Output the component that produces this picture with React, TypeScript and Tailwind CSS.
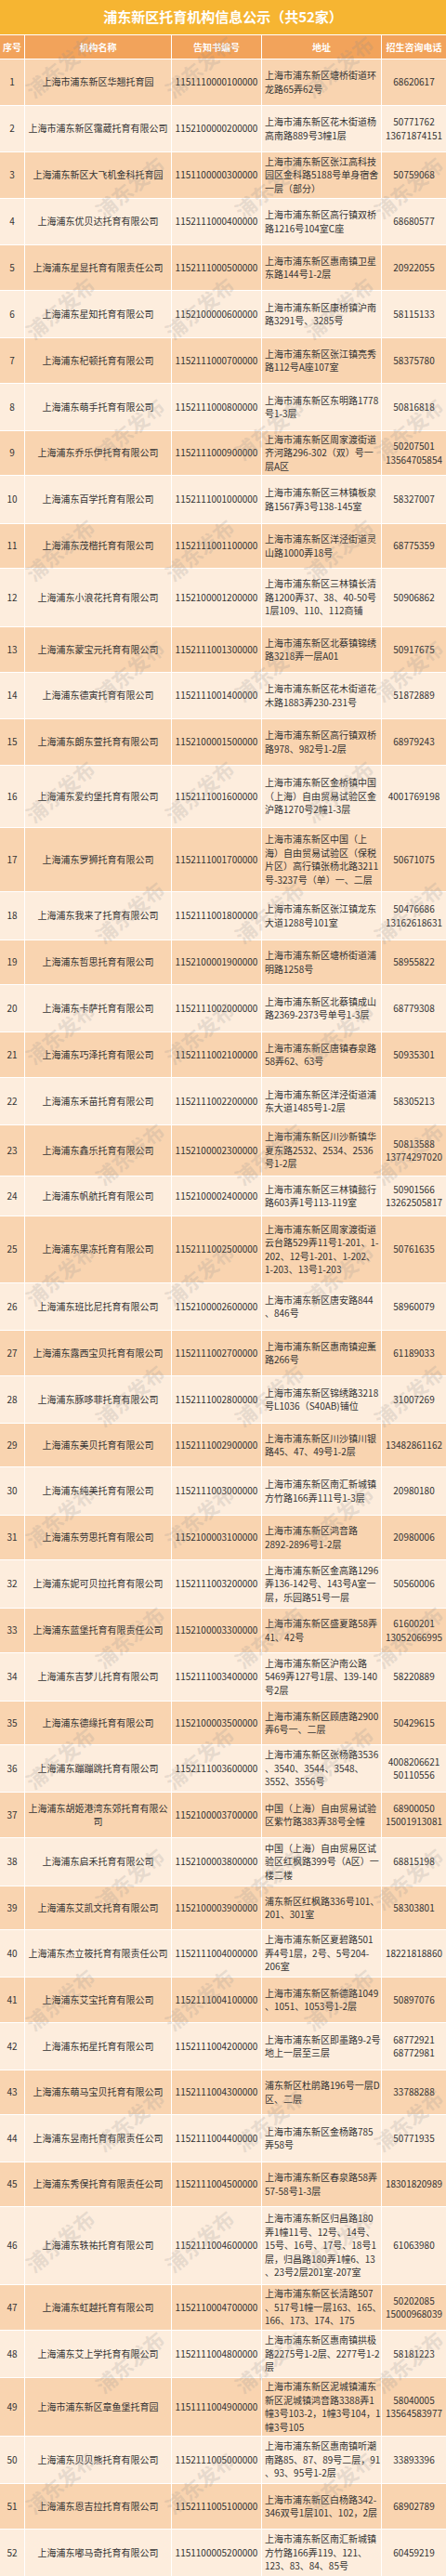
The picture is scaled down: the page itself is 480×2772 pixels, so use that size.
import React from "react";

type Row = {
  name: string[];
  code: string;
  addr: string[];
  tel: string[];
  h: string;
};

const rows: Row[] = [
  { name: ["上海市浦东新区华翘托育园"], code: "1151110000100000", addr: ["上海市浦东新区塘桥街道环", "龙路65弄62号"], tel: ["68620617"], h: "h-[50px]" },
  { name: ["上海市浦东新区霭葳托育有限公司"], code: "1152100000200000", addr: ["上海市浦东新区花木街道杨", "高南路889号3幢1层"], tel: ["50771762", "13671874151"], h: "h-[50px]" },
  { name: ["上海浦东新区大飞机金科托育园"], code: "1151100000300000", addr: ["上海市浦东新区张江高科技", "园区金科路5188号单身宿舍", "一层（部分）"], tel: ["50759068"], h: "h-[50px]" },
  { name: ["上海浦东优贝达托育有限公司"], code: "1152111000400000", addr: ["上海市浦东新区高行镇双桥", "路1216号104室C座"], tel: ["68680577"], h: "h-[50px]" },
  { name: ["上海浦东星显托育有限责任公司"], code: "1152111000500000", addr: ["上海市浦东新区惠南镇卫星", "东路144号1-2层"], tel: ["20922055"], h: "h-[49px]" },
  { name: ["上海浦东星知托育有限公司"], code: "1152100000600000", addr: ["上海市浦东新区康桥镇沪南", "路3291号、3285号"], tel: ["58115133"], h: "h-[51px]" },
  { name: ["上海浦东杞顿托育有限公司"], code: "1152111000700000", addr: ["上海市浦东新区张江镇亮秀", "路112号A座107室"], tel: ["58375780"], h: "h-[49px]" },
  { name: ["上海浦东萌手托育有限公司"], code: "1152111000800000", addr: ["上海市浦东新区东明路1778", "号1-3层"], tel: ["50816818"], h: "h-[51px]" },
  { name: ["上海浦东乔乐伊托育有限公司"], code: "1152111000900000", addr: ["上海市浦东新区周家渡街道", "齐河路296-302（双）号一", "层A区"], tel: ["50207501", "13564705854"], h: "h-[48px]" },
  { name: ["上海浦东百学托育有限公司"], code: "1152111001000000", addr: ["上海市浦东新区三林镇板泉", "路1567弄3号138-145室"], tel: ["58327007"], h: "h-[52px]" },
  { name: ["上海浦东茂楷托育有限公司"], code: "1152111001100000", addr: ["上海市浦东新区洋泾街道灵", "山路1000弄18号"], tel: ["68775359"], h: "h-[48px]" },
  { name: ["上海浦东小浪花托育有限公司"], code: "1152100001200000", addr: ["上海市浦东新区三林镇长清", "路1200弄37、38、40-50号", "1层109、110、112商铺"], tel: ["50906862"], h: "h-[63px]" },
  { name: ["上海浦东蒙宝元托育有限公司"], code: "1152111001300000", addr: ["上海市浦东新区北蔡镇锦绣", "路3218弄一层A01"], tel: ["50917675"], h: "h-[49px]" },
  { name: ["上海浦东德寅托育有限公司"], code: "1152111001400000", addr: ["上海市浦东新区花木街道花", "木路1883弄230-231号"], tel: ["51872889"], h: "h-[50px]" },
  { name: ["上海浦东朗东萱托育有限公司"], code: "1152100001500000", addr: ["上海市浦东新区高行镇双桥", "路978、982号1-2层"], tel: ["68979243"], h: "h-[50px]" },
  { name: ["上海浦东爱约堡托育有限公司"], code: "1152111001600000", addr: ["上海市浦东新区金桥镇中国", "（上海）自由贸易试验区金", "沪路1270号2幢1-3层"], tel: ["4001769198"], h: "h-[67px]" },
  { name: ["上海浦东罗狮托育有限公司"], code: "1152111001700000", addr: ["上海市浦东新区中国（上", "海）自由贸易试验区（保税", "片区）高行镇张杨北路3211", "号-3237号（单）一、二层"], tel: ["50671075"], h: "h-[69px]" },
  { name: ["上海浦东我来了托育有限公司"], code: "1152111001800000", addr: ["上海市浦东新区张江镇龙东", "大道1288号101室"], tel: ["50476686", "13162618631"], h: "h-[52px]" },
  { name: ["上海浦东哲思托育有限公司"], code: "1152100001900000", addr: ["上海市浦东新区塘桥街道浦", "明路1258号"], tel: ["58955822"], h: "h-[48px]" },
  { name: ["上海浦东卡萨托育有限公司"], code: "1152111002000000", addr: ["上海市浦东新区北蔡镇成山", "路2369-2373号单号1-3层"], tel: ["68779308"], h: "h-[51px]" },
  { name: ["上海浦东巧泽托育有限公司"], code: "1152111002100000", addr: ["上海市浦东新区唐镇春泉路", "58弄62、63号"], tel: ["50935301"], h: "h-[49px]" },
  { name: ["上海浦东禾苗托育有限公司"], code: "1152111002200000", addr: ["上海市浦东新区洋泾街道浦", "东大道1485号1-2层"], tel: ["58305213"], h: "h-[51px]" },
  { name: ["上海浦东鑫乐托育有限公司"], code: "1152100002300000", addr: ["上海市浦东新区川沙新镇华", "夏东路2532、2534、2536", "号1-2层"], tel: ["50813588", "13774297020"], h: "h-[55px]" },
  { name: ["上海浦东帆航托育有限公司"], code: "1152100002400000", addr: ["上海市浦东新区三林镇懿行", "路603弄1号113-119室"], tel: ["50901566", "13262505817"], h: "h-[43px]" },
  { name: ["上海浦东果冻托育有限公司"], code: "1152111002500000", addr: ["上海市浦东新区周家渡街道", "云台路529弄11号1-201、1-", "202、12号1-201、1-202、", "1-203、13号1-203"], tel: ["50761635"], h: "h-[72px]" },
  { name: ["上海浦东班比尼托育有限公司"], code: "1152100002600000", addr: ["上海市浦东新区唐安路844", "、846号"], tel: ["58960079"], h: "h-[51px]" },
  { name: ["上海浦东露西宝贝托育有限公司"], code: "1152111002700000", addr: ["上海市浦东新区惠南镇迎薰", "路266号"], tel: ["61189033"], h: "h-[49px]" },
  { name: ["上海浦东豚哆菲托育有限公司"], code: "1152111002800000", addr: ["上海市浦东新区锦绣路3218", "号L1036（S40AB)铺位"], tel: ["31007269"], h: "h-[51px]" },
  { name: ["上海浦东美贝托育有限公司"], code: "1152111002900000", addr: ["上海市浦东新区川沙镇川银", "路45、47、49号1-2层"], tel: ["13482861162"], h: "h-[47px]" },
  { name: ["上海浦东纯美托育有限公司"], code: "1152111003000000", addr: ["上海市浦东新区南汇新城镇", "方竹路166弄111号1-3层"], tel: ["20980180"], h: "h-[52px]" },
  { name: ["上海浦东劳思托育有限公司"], code: "1152100003100000", addr: ["上海市浦东新区鸿音路", "2892-2896号1-2层"], tel: ["20980006"], h: "h-[48px]" },
  { name: ["上海浦东妮可贝拉托育有限公司"], code: "1152111003200000", addr: ["上海市浦东新区金高路1296", "弄136-142号、143号A室一", "层，乐园路51号一层"], tel: ["50560006"], h: "h-[52px]" },
  { name: ["上海浦东蓝堡托育有限责任公司"], code: "1152100003300000", addr: ["上海市浦东新区盛夏路58弄", "41、42号"], tel: ["61600201", "13052066995"], h: "h-[48px]" },
  { name: ["上海浦东吉梦儿托育有限公司"], code: "1152111003400000", addr: ["上海市浦东新区沪南公路", "5469弄127号1层、139-140", "号2层"], tel: ["58220889"], h: "h-[52px]" },
  { name: ["上海浦东德缘托育有限公司"], code: "1152100003500000", addr: ["上海市浦东新区顾唐路2900", "弄6号一、二层"], tel: ["50429615"], h: "h-[47px]" },
  { name: ["上海浦东蹦蹦跳托育有限公司"], code: "1152111003600000", addr: ["上海市浦东新区张杨路3536", "、3540、3544、3548、", "3552、3556号"], tel: ["4008206621", "50110556"], h: "h-[51px]" },
  { name: ["上海浦东胡姬港湾东郊托育有限公", "司"], code: "1152100003700000", addr: ["中国（上海）自由贸易试验", "区紫竹路383弄38号全幢"], tel: ["68900050", "15001913081"], h: "h-[49px]" },
  { name: ["上海浦东启禾托育有限公司"], code: "1152100003800000", addr: ["中国（上海）自由贸易区试", "验区红枫路399号（A区）一", "楼二楼"], tel: ["68815198"], h: "h-[52px]" },
  { name: ["上海浦东艾凯文托育有限公司"], code: "1152100003900000", addr: ["浦东新区红枫路336号101、", "201、301室"], tel: ["58303801"], h: "h-[47px]" },
  { name: ["上海浦东杰立筱托育有限责任公司"], code: "1152111004000000", addr: ["上海市浦东新区夏碧路501", "弄4号1层，2号、5号204-", "206室"], tel: ["18221818860"], h: "h-[51px]" },
  { name: ["上海浦东艾宝托育有限公司"], code: "1152111004100000", addr: ["上海市浦东新区新德路1049", "、1051、1053号1-2层"], tel: ["50897076"], h: "h-[49px]" },
  { name: ["上海浦东拓星托育有限公司"], code: "1152111004200000", addr: ["上海市浦东新区即墨路9-2号", "地上一层至三层"], tel: ["68772921", "68772981"], h: "h-[51px]" },
  { name: ["上海浦东萌马宝贝托育有限公司"], code: "1152111004300000", addr: ["浦东新区杜鹃路196号一层D", "区、二层"], tel: ["33788288"], h: "h-[48px]" },
  { name: ["上海浦东昱南托育有限责任公司"], code: "1152111004400000", addr: ["上海市浦东新区金杨路785", "弄58号"], tel: ["50771935"], h: "h-[51px]" },
  { name: ["上海浦东秀俣托育有限责任公司"], code: "1152111004500000", addr: ["上海市浦东新区春泉路58弄", "57-58号1-3层"], tel: ["18301820989"], h: "h-[48px]" },
  { name: ["上海浦东轶祐托育有限公司"], code: "1152111004600000", addr: ["上海市浦东新区归昌路180", "弄1幢11号、12号、14号、", "15号、16号、17号、18号1", "层，归昌路180弄1幢6、13", "、23号2层201室-207室"], tel: ["61063980"], h: "h-[84px]" },
  { name: ["上海浦东虹越托育有限公司"], code: "1152110004700000", addr: ["上海市浦东新区长清路507", "、517号1幢一层163、165、", "166、173、174、175"], tel: ["50202085", "15000968039"], h: "h-[49px]" },
  { name: ["上海浦东艾上学托育有限公司"], code: "1152111004800000", addr: ["上海市浦东新区惠南镇拱极", "路2275号1-2层、2277号1-2", "层"], tel: ["58181223"], h: "h-[51px]" },
  { name: ["上海市浦东新区章鱼堡托育园"], code: "1151111004900000", addr: ["上海市浦东新区泥城镇浦东", "新区泥城镇鸿音路3388弄1", "幢3号103-2，1幢3号104，1", "幢3号105"], tel: ["58040005", "13564583977"], h: "h-[63px]" },
  { name: ["上海浦东贝贝熊托育有限公司"], code: "1152111005000000", addr: ["上海市浦东新区惠南镇听潮", "南路85、87、89号二层，91", "、93、95号1-2层"], tel: ["33893396"], h: "h-[51px]" },
  { name: ["上海浦东恩吉拉托育有限公司"], code: "1152111005100000", addr: ["上海市浦东新区白杨路342-", "346双号1层101、102，2层"], tel: ["68902789"], h: "h-[49px]" },
  { name: ["上海浦东嘟马奇托育有限公司"], code: "1151100005200000", addr: ["上海市浦东新区南汇新城镇", "方竹路166弄119、121、", "123、83、84、85号"], tel: ["60459219"], h: "h-[51px]" },
];

const cols = "grid grid-cols-[26px_158px_97px_129px_70px]";

// faint diagonal "浦东发布" stamps laid over the table, kept inside the page
const marks: { x: number; y: number }[] = [];
for (let i = 0; i < 21; i++) {
  for (let j = 0; j < 3; j++) {
    marks.push({ x: (i % 2 ? 95 : 20) + j * 150, y: 60 + i * 130 });
  }
}

export default function App() {
  return (
    <div className="relative w-[480px] overflow-hidden bg-white text-[#333] font-['Noto_Sans_CJK_SC','Noto_Sans',sans-serif]">
      <div className="h-[37px] bg-[#f6b532] flex items-center justify-center text-white text-[15px] font-bold">
        浦东新区托育机构信息公示（共52家）
      </div>
      <div className={`${cols} h-[26px] bg-[#f2a35b] border-t border-white text-white text-[10px] font-bold`}>
        <div className="flex items-center justify-center">序号</div>
        <div className="flex items-center justify-center border-l border-white">机构名称</div>
        <div className="flex items-center justify-center border-l border-white">告知书编号</div>
        <div className="flex items-center justify-center border-l border-white">地址</div>
        <div className="flex items-center justify-center border-l border-white">招生咨询电话</div>
      </div>
      {rows.map((r, i) => (
        <div
          key={i}
          className={`${cols} ${r.h} border-t border-white text-[10px] leading-[14.5px] ${i % 2 === 0 ? "bg-[#f9d4b0]" : "bg-[#fdeddd]"}`}
        >
          <div className="flex items-center justify-center">{i + 1}</div>
          <div className="flex flex-col items-center justify-center border-l border-white">
            {r.name.map((n) => (
              <span key={n} className="whitespace-nowrap">{n}</span>
            ))}
          </div>
          <div className="flex items-center justify-center border-l border-white">{r.code}</div>
          <div className="flex flex-col justify-center pl-[3px] border-l border-white">
            {r.addr.map((a, k) => (
              <span key={k} className="whitespace-nowrap">{a}</span>
            ))}
          </div>
          <div className="flex flex-col items-center justify-center border-l border-white">
            {r.tel.map((t) => (
              <span key={t}>{t}</span>
            ))}
          </div>
        </div>
      ))}
      <div className="pointer-events-none absolute inset-0">
        {marks.map((m, k) => (
          <span
            key={k}
            className="absolute -rotate-[40deg] whitespace-nowrap text-[22px] leading-none font-bold text-[#8c8c8c]/20"
            style={{ left: m.x, top: m.y }}
          >
            浦东发布
          </span>
        ))}
      </div>
    </div>
  );
}
